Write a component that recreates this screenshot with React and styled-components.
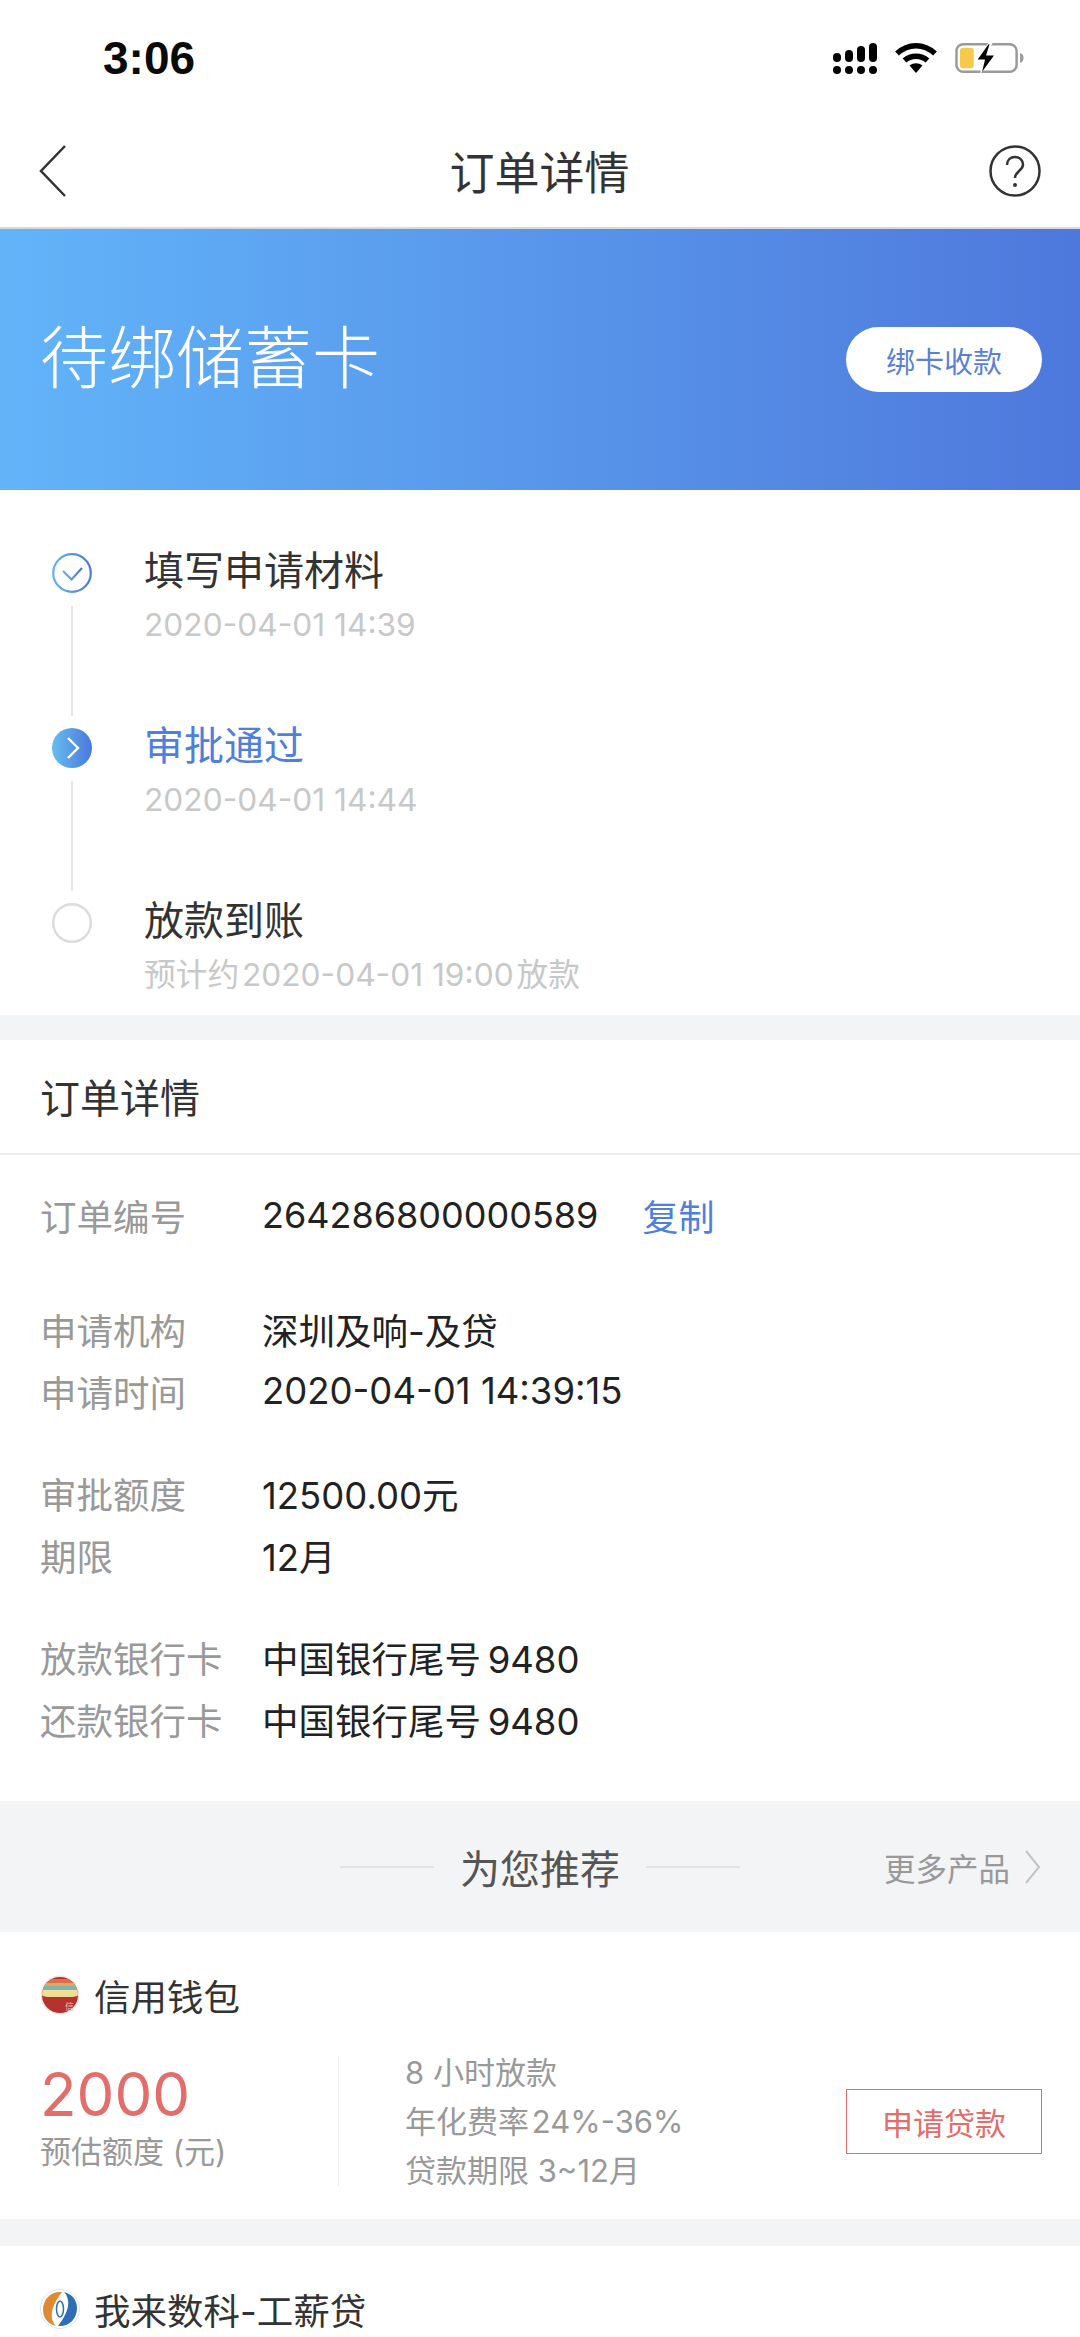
import styled, { createGlobalStyle } from "styled-components";

const GlobalStyle = createGlobalStyle`
  html, body {
    margin: 0;
    padding: 0;
    background: #fff;
    font-family: Inter, "Noto Sans CJK SC", sans-serif;
  }
  * { box-sizing: border-box; }
`;

const Page = styled.div`
  width: 1080px;
  height: 2337px;
  overflow: hidden;
  background: #fff;
`;

const StatusBar = styled.div`
  height: 114px;
  padding: 2px 56px 0 103px;
  display: flex;
  align-items: center;
  justify-content: space-between;
`;

const Clock = styled.div`
  font-family: "Liberation Sans", sans-serif;
  font-size: 46px;
  font-weight: 700;
  color: #0a0a0a;
`;

const StatusIcons = styled.div`
  display: flex;
  align-items: center;
  gap: 18px;
`;

const NavBar = styled.div`
  height: 115px;
  padding: 0 39px 0 38px;
  display: grid;
  grid-template-columns: 1fr auto 1fr;
  align-items: center;
  border-bottom: 2px solid #d5d9e0;
`;

const NavTitle = styled.div`
  font-size: 45px;
  color: #333;
`;

const NavRight = styled.div`
  display: flex;
  justify-content: flex-end;
`;

const Banner = styled.div`
  height: 261px;
  padding: 0 38px 0 40px;
  display: flex;
  align-items: center;
  justify-content: space-between;
  background: linear-gradient(90deg, #62b4f9, #4e78dc);
`;

const BannerTitle = styled.div`
  font-size: 68px;
  font-weight: 300;
  color: #fff;
  margin-bottom: 12px;
`;

const BannerButton = styled.div`
  width: 196px;
  height: 65px;
  border-radius: 33px;
  background: #fff;
  color: #5b7fd6;
  font-size: 29px;
  display: flex;
  align-items: center;
  justify-content: center;
`;

const Timeline = styled.div`
  height: 525px;
  padding: 63px 0 0 52px;
`;

const Step = styled.div`
  height: 175px;
  display: flex;
  gap: 52px;
`;

const Rail = styled.div`
  width: 40px;
  display: flex;
  flex-direction: column;
  align-items: center;
`;

const RailLine = styled.div`
  width: 2px;
  height: 110px;
  margin-top: 13px;
  background: #e6e6e6;
`;

const StepText = styled.div`
  display: flex;
  flex-direction: column;
`;

const StepTitle = styled.div`
  font-size: 40px;
  line-height: 50px;
  margin-top: -7px;
  color: ${(p) => (p.$active ? "#4f7fdb" : "#333")};
`;

const StepDate = styled.div`
  font-size: 31.7px;
  line-height: 40px;
  margin-top: 9px;
  color: #c8c8c8;
`;

const Gap = styled.div`
  height: ${(p) => p.$h}px;
  background: #f3f4f6;
`;

const SectionHead = styled.div`
  height: 115px;
  padding: 0 40px 2px;
  display: flex;
  align-items: center;
  border-bottom: 2px solid #eceef1;
  font-size: 40px;
  color: #333;
`;

const Details = styled.div`
  height: 646px;
  padding-top: 29px;
`;

const InfoGroup = styled.div`
  padding-bottom: ${(p) => p.$gap}px;
`;

const InfoRow = styled.div`
  height: 62px;
  padding-left: 40px;
  display: flex;
  align-items: center;
  font-size: 36.5px;
`;

const InfoLabel = styled.div`
  width: 222px;
  color: #999;
`;

const InfoValue = styled.div`
  color: #222;
  font-size: ${(p) => (p.$digits ? "36px" : "inherit")};
`;

const CopyLink = styled.div`
  margin-left: 44px;
  font-size: 36px;
  color: #4f7fdb;
`;

const RecommendBar = styled.div`
  height: 131px;
  padding: 0 39px;
  background: #f3f4f6;
  display: grid;
  grid-template-columns: 1fr auto 1fr;
  align-items: center;
`;

const RecommendCenter = styled.div`
  display: flex;
  align-items: center;
  gap: 26px;
  font-size: 40px;
  color: #555;
`;

const RecommendLine = styled.div`
  width: 94px;
  height: 2px;
  background: #e2e3e6;
`;

const MoreLink = styled.div`
  grid-column: 3;
  display: flex;
  align-items: center;
  justify-content: flex-end;
  gap: 14px;
  font-size: 31.5px;
  color: #999;
`;

const Product = styled.div`
  padding: 40px 38px 0 40px;
  height: ${(p) => p.$h}px;
`;

const ProductHead = styled.div`
  display: flex;
  align-items: center;
  gap: 14px;
  height: 46px;
  font-size: 36.5px;
  color: #333;
`;

const ProductBody = styled.div`
  margin-top: 38px;
  display: flex;
  align-items: center;
  height: 130px;
`;

const Amount = styled.div`
  width: 299px;
  height: 130px;
  border-right: 1px solid #eeeeee;
`;

const AmountValue = styled.div`
  font-size: 60px;
  line-height: 70px;
  margin-top: 3px;
  color: #e26d6a;
`;

const AmountLabel = styled.div`
  font-size: 31px;
  line-height: 44px;
  margin-top: 1px;
  color: #999;
`;

const Features = styled.div`
  flex: 1;
  padding-left: 66px;
  font-size: 31px;
  line-height: 49px;
  color: #999;
`;

const ApplyButton = styled.div`
  width: 196px;
  height: 65px;
  border: 1px solid #e26d6a;
  color: #e26d6a;
  font-size: 31px;
  display: flex;
  align-items: center;
  justify-content: center;
`;

const Signal = () => (
  <svg width="44" height="31" viewBox="0 0 44 31">
    <g fill="#000">
      <rect x="0" y="10" width="8" height="9" rx="4" />
      <rect x="12" y="7" width="8" height="12" rx="4" />
      <rect x="24" y="3" width="8" height="16" rx="4" />
      <rect x="36" y="0" width="8" height="19" rx="4" />
      <circle cx="4" cy="27" r="4" />
      <circle cx="16" cy="27" r="4" />
      <circle cx="28" cy="27" r="4" />
      <circle cx="40" cy="27" r="4" />
    </g>
  </svg>
);

const Wifi = () => (
  <svg width="42" height="32" viewBox="0 0 42 32">
    <g fill="none" stroke="#000" strokeWidth="5.5">
      <path d="M2 11.5C13 1 29 1 40 11.5" />
      <path d="M9.5 18.5C16 12.8 26 12.8 32.5 18.5" />
    </g>
    <path d="M14.5 23.5C18.5 20.5 23.5 20.5 27.5 23.5L21 31z" fill="#000" />
  </svg>
);

const Battery = () => (
  <svg width="69" height="34" viewBox="0 0 70 34">
    <rect x="1.5" y="3" width="61" height="28" rx="7" fill="none" stroke="#9a9a9a" strokeWidth="2.5" />
    <rect x="5" y="6.5" width="14" height="21" rx="3.5" fill="#f5c94c" />
    <path d="M66 12c2.5 .8 3.5 2.5 3.5 5s-1 4.200-3.500 5z" fill="#9a9a9a" />
    <path d="M35 0L21 20h8l-4 14 17-22h-9l6-12z" fill="#fff" />
    <path d="M34 3L23 18.500h7.500l-3 12.500 12-16.500h-8l3.500-11.500z" fill="#000" />
  </svg>
);

const BackIcon = () => (
  <svg width="30" height="54" viewBox="0 0 30 54">
    <path d="M27 2L3 27l24 25" fill="none" stroke="#333" strokeWidth="2.500" />
  </svg>
);

const HelpIcon = () => (
  <svg width="52" height="52" viewBox="0 0 52 52">
    <circle cx="26" cy="26" r="24.500" fill="none" stroke="#333" strokeWidth="2.500" />
    <path d="M18 20c0-5 3.500-8 8-8s8 3 8 7.500c0 6.500-8 6.500-8 13.500" fill="none" stroke="#333" strokeWidth="2.500" />
    <circle cx="26" cy="40" r="2" fill="#333" />
  </svg>
);

const DoneDot = () => (
  <svg width="40" height="40" viewBox="0 0 40 40">
    <defs>
      <linearGradient id="doneGrad" x1="0" x2="1">
        <stop offset="0" stopColor="#62b4e8" />
        <stop offset="1" stopColor="#4e78dc" />
      </linearGradient>
    </defs>
    <circle cx="20" cy="20" r="18.800" fill="none" stroke="url(#doneGrad)" strokeWidth="2.200" />
    <path d="M11 18l8.500 8.500L30 15" fill="none" stroke="url(#doneGrad)" strokeWidth="2.200" />
  </svg>
);

const ActiveDot = () => (
  <svg width="40" height="40" viewBox="0 0 40 40">
    <defs>
      <linearGradient id="activeGrad" x1="0" x2="1">
        <stop offset="0" stopColor="#67bdee" />
        <stop offset="1" stopColor="#4a78de" />
      </linearGradient>
    </defs>
    <circle cx="20" cy="20" r="20" fill="url(#activeGrad)" />
    <path d="M16 10l10 10-10 10" fill="none" stroke="#fff" strokeWidth="2.400" />
  </svg>
);

const TodoDot = () => (
  <svg width="40" height="40" viewBox="0 0 40 40">
    <circle cx="20" cy="20" r="18.800" fill="none" stroke="#dcdcdc" strokeWidth="2.400" />
  </svg>
);

const MoreChevron = () => (
  <svg width="17" height="36" viewBox="0 0 17 36">
    <path d="M2 2l13 16L2 34" fill="none" stroke="#c4c4c4" strokeWidth="2" />
  </svg>
);

const WalletLogo = () => (
  <svg width="40" height="40" viewBox="0 0 40 40">
    <defs>
      <clipPath id="walletClip">
        <circle cx="20" cy="20" r="18" />
      </clipPath>
    </defs>
    <circle cx="20" cy="20" r="19.500" fill="#f4e6e4" />
    <g clipPath="url(#walletClip)">
      <rect width="40" height="40" fill="#b5322f" />
      <rect x="0" y="4" width="40" height="4" fill="#d9704a" />
      <rect x="0" y="8" width="40" height="3" fill="#e8a65c" />
      <rect x="0" y="11" width="40" height="4" fill="#7fb5b0" />
      <path d="M0 15h40v2c0 3-4 5-8 5H8c-4 0-8-2-8-5z" fill="#f0de96" />
    </g>
    <text x="25" y="35" fontSize="9" fill="#f0c8bb">信</text>
  </svg>
);

const WolaiLogo = () => (
  <svg width="40" height="40" viewBox="0 0 40 40">
    <circle cx="20" cy="20" r="19.500" fill="#fff" stroke="#dfe4ea" />
    <path d="M22 3C11 2 3 10 3 21c0 8 5 14 13 16-3-3-5-8-4-14 1-7 5-13 10-20z" fill="#dd8a33" />
    <path d="M18 37c11 1 19-7 19-18 0-8-5-14-13-16 3 3 5 8 4 14-1 7-5 13-10 20z" fill="#2f6db5" />
    <ellipse cx="20" cy="20" rx="3.500" ry="8" fill="#fff" stroke="#2f6db5" strokeWidth="1.500" />
  </svg>
);

const steps = [
  { title: "填写申请材料", date: "2020-04-01 14:39", dot: <DoneDot /> },
  { title: "审批通过", date: "2020-04-01 14:44", dot: <ActiveDot />, active: true },
  { title: "放款到账", date: "预计约\u200a2020-04-01 19:00\u200a放款", dot: <TodoDot />, last: true },
];

const infoGroups = [
  { gap: 52, rows: [["订单编号", "264286800000589", true]] },
  { gap: 40, rows: [["申请机构", "深圳及响-及贷"], ["申请时间", "2020-04-01 14:39:15"]] },
  { gap: 40, rows: [["审批额度", "12500.00元"], ["期限", "12月"]] },
  { gap: 0, rows: [["放款银行卡", "中国银行尾号\u20099480"], ["还款银行卡", "中国银行尾号\u20099480"]] },
];

export default function App() {
  return (
    <Page>
      <GlobalStyle />
      <StatusBar>
        <Clock>3:06</Clock>
        <StatusIcons>
          <Signal />
          <Wifi />
          <Battery />
        </StatusIcons>
      </StatusBar>
      <NavBar>
        <BackIcon />
        <NavTitle>订单详情</NavTitle>
        <NavRight>
          <HelpIcon />
        </NavRight>
      </NavBar>
      <Banner>
        <BannerTitle>待绑储蓄卡</BannerTitle>
        <BannerButton>绑卡收款</BannerButton>
      </Banner>
      <Timeline>
        {steps.map((s) => (
          <Step key={s.title}>
            <Rail>
              {s.dot}
              {!s.last && <RailLine />}
            </Rail>
            <StepText>
              <StepTitle $active={s.active}>{s.title}</StepTitle>
              <StepDate>{s.date}</StepDate>
            </StepText>
          </Step>
        ))}
      </Timeline>
      <Gap $h={25} />
      <SectionHead>订单详情</SectionHead>
      <Details>
        {infoGroups.map((g) => (
          <InfoGroup key={g.rows[0][0]} $gap={g.gap}>
            {g.rows.map(([label, value, copy]) => (
              <InfoRow key={label}>
                <InfoLabel>{label}</InfoLabel>
                <InfoValue $digits={copy}>{value}</InfoValue>
                {copy && <CopyLink>复制</CopyLink>}
              </InfoRow>
            ))}
          </InfoGroup>
        ))}
      </Details>
      <RecommendBar>
        <span />
        <RecommendCenter>
          <RecommendLine />
          为您推荐
          <RecommendLine />
        </RecommendCenter>
        <MoreLink>
          更多产品
          <MoreChevron />
        </MoreLink>
      </RecommendBar>
      <Product $h={287}>
        <ProductHead>
          <WalletLogo />
          信用钱包
        </ProductHead>
        <ProductBody>
          <Amount>
            <AmountValue>2000</AmountValue>
            <AmountLabel>预估额度 (元)</AmountLabel>
          </Amount>
          <Features>
            <div>8 小时放款</div>
            <div>年化费率{"\u200a"}24%-36%</div>
            <div>贷款期限 3~12月</div>
          </Features>
          <ApplyButton>申请贷款</ApplyButton>
        </ProductBody>
      </Product>
      <Gap $h={27} />
      <Product $h={92}>
        <ProductHead>
          <WolaiLogo />
          我来数科-工薪贷
        </ProductHead>
      </Product>
    </Page>
  );
}
